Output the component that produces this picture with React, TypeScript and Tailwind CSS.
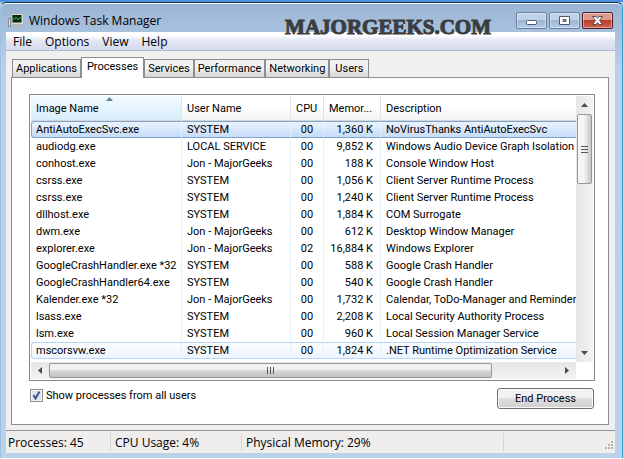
import type { ReactNode } from 'react';
import { useState } from 'react';
import clsx from 'clsx';

type Process = {
  name: string;
  user: string;
  cpu: string;
  memory: string;
  description: string;
};

const MENU = ['File', 'Options', 'View', 'Help'];
const TABS = ['Applications', 'Processes', 'Services', 'Performance', 'Networking', 'Users'];

const PROCESSES: Process[] = [
  { name: 'AntiAutoExecSvc.exe', user: 'SYSTEM', cpu: '00', memory: '1,360 K', description: 'NoVirusThanks AntiAutoExecSvc' },
  { name: 'audiodg.exe', user: 'LOCAL SERVICE', cpu: '00', memory: '9,852 K', description: 'Windows Audio Device Graph Isolation' },
  { name: 'conhost.exe', user: 'Jon - MajorGeeks', cpu: '00', memory: '188 K', description: 'Console Window Host' },
  { name: 'csrss.exe', user: 'SYSTEM', cpu: '00', memory: '1,056 K', description: 'Client Server Runtime Process' },
  { name: 'csrss.exe', user: 'SYSTEM', cpu: '00', memory: '1,240 K', description: 'Client Server Runtime Process' },
  { name: 'dllhost.exe', user: 'SYSTEM', cpu: '00', memory: '1,884 K', description: 'COM Surrogate' },
  { name: 'dwm.exe', user: 'Jon - MajorGeeks', cpu: '00', memory: '612 K', description: 'Desktop Window Manager' },
  { name: 'explorer.exe', user: 'Jon - MajorGeeks', cpu: '02', memory: '16,884 K', description: 'Windows Explorer' },
  { name: 'GoogleCrashHandler.exe *32', user: 'SYSTEM', cpu: '00', memory: '588 K', description: 'Google Crash Handler' },
  { name: 'GoogleCrashHandler64.exe', user: 'SYSTEM', cpu: '00', memory: '540 K', description: 'Google Crash Handler' },
  { name: 'Kalender.exe *32', user: 'Jon - MajorGeeks', cpu: '00', memory: '1,732 K', description: 'Calendar, ToDo-Manager and Reminder' },
  { name: 'lsass.exe', user: 'SYSTEM', cpu: '00', memory: '2,208 K', description: 'Local Security Authority Process' },
  { name: 'lsm.exe', user: 'SYSTEM', cpu: '00', memory: '960 K', description: 'Local Session Manager Service' },
  { name: 'mscorsvw.exe', user: 'SYSTEM', cpu: '00', memory: '1,824 K', description: '.NET Runtime Optimization Service' },
];

const SELECTED = 0;
const HOVERED = 13;

export default function App() {
  return (
    <div className="flex min-h-screen flex-col border-t-2 border-b border-t-[#4a90dc] border-b-white bg-[#a9cbe9] font-['Open_Sans','Noto_Sans',sans-serif] text-black">
      <div className="flex flex-1 flex-col rounded-t-md border-x border-t border-[#16324f] border-l-[#9dbfe0] border-r-[#2f9fd0] bg-linear-to-b from-[#9ab5d4] via-[#bad1ea] via-15% to-[#bbd2eb] pr-[7px] pb-[5px] pl-[5px] shadow-[inset_0_1px_0_#f4faff]">
        <TitleBar />
        <main className="flex flex-1 flex-col bg-[#f0f0f0]">
          <MenuBar />
          <div className="flex flex-1 flex-col pt-[6px] pr-[6px] pb-[5px] pl-[5px]">
            <Tabs />
            <Panel />
          </div>
          <StatusBar />
        </main>
      </div>
    </div>
  );
}

function TitleBar() {
  return (
    <header className="relative flex h-[29px] items-center gap-[5px] pt-[6px] pl-[2px]">
      <MonitorIcon />
      <h1 className="text-[12px] leading-4">Windows Task Manager</h1>
      <span className="absolute top-[12px] right-[124px] z-10 font-['Liberation_Serif',serif] text-[21px] leading-[24px] font-bold text-[#3a3d40] [-webkit-text-stroke:1px_#3a3d40]">
        MAJORGEEKS.COM
      </span>
      <div className="ml-auto flex gap-[2px] pr-[2px]">
        <CaptionButton label="Minimize">
          <rect x="10.5" y="8.5" width="10" height="4" rx="1" fill="#fff" stroke="#4d5a6b" />
        </CaptionButton>
        <CaptionButton label="Maximize">
          <path d="M10.5 4.500h10v8h-10z M14 7.500v2h3v-2z" fill="#fff" stroke="#4d5a6b" fillRule="evenodd" />
        </CaptionButton>
        <CaptionButton label="Close" danger>
          <path
            d="M10.500 4.500h3.500l1.500 1.800 1.500-1.800h3.500l-3 4 3 4h-3.500l-1.500-1.800-1.500 1.800h-3.500l3-4z"
            fill="#fff"
            stroke="#5b4a55"
          />
        </CaptionButton>
      </div>
    </header>
  );
}

function MonitorIcon() {
  return (
    <svg width="16" height="16" viewBox="0 0 16 16" aria-hidden>
      <rect x="0.500" y="5.500" width="2" height="8" fill="#e2e4e2" stroke="#8b9390" />
      <rect x="3.500" y="0.500" width="12" height="11" rx="1" fill="#d9ddd8" stroke="#9aa19c" strokeWidth="0.500" />
      <rect x="4.500" y="2" width="9" height="7.500" fill="#08240f" />
      <path d="M5 6h2l1-2 2 3 1-2h2.500" fill="none" stroke="#35b34a" />
      <path d="M8 11.500h4v1.500h2v2H6V13h2z" fill="#b4bab5" />
    </svg>
  );
}

function CaptionButton({ label, danger = false, children }: { label: string; danger?: boolean; children: ReactNode }) {
  return (
    <button
      type="button"
      aria-label={label}
      className={clsx(
        'h-[17px] w-[31px] rounded-[2px] border shadow-[inset_0_0_0_1px_rgba(255,255,255,0.4)]',
        danger
          ? 'border-[#4e1d2a] bg-linear-to-b from-[#dd9b8f] from-45% via-[#bd3a29] via-50% to-[#cf6651]'
          : 'border-[#687f9d] bg-linear-to-b from-[#bfd2e8] from-45% via-[#9db6d2] via-50% to-[#b3cce6]',
      )}
    >
      <svg width="31" height="17" viewBox="0 0 31 17" className="-m-px max-w-none" aria-hidden>
        {children}
      </svg>
    </button>
  );
}

function MenuBar() {
  return (
    <nav className="flex h-[19px] items-center border-b border-[#b4bac9] bg-linear-to-b from-white from-20% via-[#e4e8f4] via-45% to-[#d5daed] pt-[2px] pl-[7px] text-[12px] leading-4">
      {MENU.map((item) => (
        <button key={item} type="button" className="mr-[13px]">
          {item}
        </button>
      ))}
    </nav>
  );
}

function Tabs() {
  const [active, setActive] = useState('Processes');
  return (
    <div role="tablist" className="flex items-end pl-px font-['Roboto',sans-serif] text-[11px] leading-[14px]">
      {TABS.map((tab) => (
        <button
          key={tab}
          type="button"
          role="tab"
          aria-selected={tab === active}
          onClick={() => setActive(tab)}
          className={clsx(
            'min-w-[40px] border border-b-0 border-[#8b8d93]',
            tab === active
              ? 'z-10 -mb-px h-[21px] bg-white px-[5px] pb-[2px]'
              : 'h-[18px] bg-linear-to-b from-[#f2f2f2] from-45% to-[#d6d6d6] px-[3px]',
          )}
        >
          {tab}
        </button>
      ))}
    </div>
  );
}

function Panel() {
  return (
    <section className="flex flex-1 flex-col border border-[#8b8d93] bg-white pt-4 pr-[13px] pb-[15px] pl-[17px] font-['Roboto',sans-serif] text-[11px] leading-[15px]">
      <div className="flex flex-1 flex-col border border-[#828790] p-px">
        <div className="flex flex-1">
          <div className="min-w-0 flex-1 overflow-hidden">
            <ProcessTable />
          </div>
          <VerticalScrollbar />
        </div>
        <HorizontalScrollbar />
      </div>
      <div className="flex items-start justify-between px-px pt-[7px]">
        <label className="flex items-center gap-[3px]">
          <span className="relative flex">
            <input
              type="checkbox"
              defaultChecked
              className="peer size-[13px] appearance-none border border-[#8e8f8f] bg-[#dfe4ec] shadow-[inset_0_0_0_1px_#f6f6f6]"
            />
            <svg
              width="13"
              height="13"
              viewBox="0 0 13 13"
              className="pointer-events-none absolute inset-0 hidden peer-checked:block"
              aria-hidden
            >
              <path d="M3.500 6l2 3.500 4-7" fill="none" stroke="#42568f" strokeWidth="2" />
            </svg>
          </span>
          Show processes from all users
        </label>
        <button
          type="button"
          className="h-[21px] w-[97px] rounded-[3px] border border-[#707070] bg-linear-to-b from-[#f2f2f2] from-45% via-[#dedede] via-50% to-[#cfcfcf] shadow-[inset_0_0_0_1px_#fafafa]"
        >
          End Process
        </button>
      </div>
    </section>
  );
}

function ProcessTable() {
  return (
    <table className="w-full table-fixed border-separate border-spacing-0 text-left whitespace-nowrap">
      <colgroup>
        <col className="w-[151px]" />
        <col className="w-[109px]" />
        <col className="w-[33px]" />
        <col className="w-[57px]" />
        <col />
      </colgroup>
      <thead>
        <tr className="h-[25px]">
          <HeaderCell className="relative border-r-[#96d9f9] bg-linear-to-b from-[#f2fbff] to-[#d8effb]">
            Image Name
            <svg width="7" height="4" viewBox="0 0 7 4" className="absolute top-px left-1/2" aria-hidden>
              <path d="M0 4l3.500-4L7 4z" fill="#5b8096" />
            </svg>
          </HeaderCell>
          <HeaderCell>User Name</HeaderCell>
          <HeaderCell>CPU</HeaderCell>
          <HeaderCell>Memor...</HeaderCell>
          <HeaderCell className="border-r-0">Description</HeaderCell>
        </tr>
      </thead>
      <tbody>
        {PROCESSES.map((process, i) => (
          <ProcessRow key={i} process={process} state={i === SELECTED ? 'selected' : i === HOVERED ? 'hovered' : 'plain'} />
        ))}
      </tbody>
    </table>
  );
}

function HeaderCell({ className, children }: { className?: string; children: ReactNode }) {
  return (
    <th
      className={clsx(
        'border-r border-b border-r-[#e2e4e8] border-b-[#d5d5d5] px-[5px] pt-px font-normal',
        className ?? '',
        !className?.includes('bg-') && 'bg-linear-to-b from-white from-45% to-[#f3f4f5]',
      )}
    >
      {children}
    </th>
  );
}

function ProcessRow({ process, state }: { process: Process; state: 'plain' | 'selected' | 'hovered' }) {
  const cell = clsx(
    'overflow-hidden border-y border-r border-r-[#e3f0fb] py-0 pl-[5px] last:border-r-0 first:rounded-l-[3px]',
    state === 'plain' && 'border-y-transparent',
    state === 'selected' && 'border-y-[#7da2ce] bg-linear-to-b from-[#eaf3fe] to-[#c5dcf8] first:border-l first:border-l-[#7da2ce] first:pl-[4px]',
    state === 'hovered' && 'border-y-[#b8d6fb] bg-linear-to-b from-[#fbfdff] to-[#edf5fe] first:border-l first:border-l-[#b8d6fb] first:pl-[4px]',
  );
  return (
    <tr className="h-[17px]">
      <td className={cell}>{process.name}</td>
      <td className={cell}>{process.user}</td>
      <td className={clsx(cell, 'pr-[5px] text-center')}>{process.cpu}</td>
      <td className={clsx(cell, 'pr-[7px] text-right')}>{process.memory}</td>
      <td className={cell}>{process.description}</td>
    </tr>
  );
}

function VerticalScrollbar() {
  return (
    <div className="flex w-[17px] flex-col bg-linear-to-r from-[#e6e6e6] to-[#f3f3f3]">
      <button type="button" aria-label="Scroll up" className="flex h-[18px] items-center justify-center">
        <svg width="7" height="4" viewBox="0 0 7 4" aria-hidden>
          <path d="M0 4l3.500-4L7 4z" fill="#4a4a4a" />
        </svg>
      </button>
      <div className="flex flex-1 flex-col">
        <div className="mx-px flex h-[70px] flex-col items-center justify-center gap-[2px] rounded-[2px] border border-[#979797] bg-linear-to-r from-[#f5f5f5] from-45% to-[#c6c6c8]">
          <span className="h-px w-[7px] bg-[#555]" />
          <span className="h-px w-[7px] bg-[#555]" />
          <span className="h-px w-[7px] bg-[#555]" />
        </div>
      </div>
      <button type="button" aria-label="Scroll down" className="flex h-[18px] items-center justify-center">
        <svg width="7" height="4" viewBox="0 0 7 4" aria-hidden>
          <path d="M0 0h7L3.500 4z" fill="#4a4a4a" />
        </svg>
      </button>
    </div>
  );
}

function HorizontalScrollbar() {
  return (
    <div className="mr-[17px] flex h-[17px] bg-linear-to-b from-[#e6e6e6] to-[#f3f3f3]">
      <button type="button" aria-label="Scroll left" className="flex w-[18px] items-center justify-center">
        <svg width="4" height="7" viewBox="0 0 4 7" aria-hidden>
          <path d="M4 0v7L0 3.500z" fill="#4a4a4a" />
        </svg>
      </button>
      <div className="flex flex-1 py-px">
        <div className="flex w-[87%] items-center justify-center gap-[2px] rounded-[2px] border border-[#979797] bg-linear-to-b from-[#f0f0f0] from-45% via-[#d8d8d8] via-50% to-[#c2c2c4]">
          <span className="h-[7px] w-px bg-[#555]" />
          <span className="h-[7px] w-px bg-[#555]" />
          <span className="h-[7px] w-px bg-[#555]" />
        </div>
      </div>
      <button type="button" aria-label="Scroll right" className="flex w-[18px] items-center justify-center">
        <svg width="4" height="7" viewBox="0 0 4 7" aria-hidden>
          <path d="M0 0l4 3.500L0 7z" fill="#4a4a4a" />
        </svg>
      </button>
    </div>
  );
}

function StatusBar() {
  return (
    <footer className="flex h-[23px] border-t border-[#8f9196] bg-[#f0eded] py-[2px] text-[12px] leading-[20px]">
      <span className="w-[105px] border-r border-[#d5d5d5] pl-[2px]">Processes: 45</span>
      <span className="w-[131px] border-r border-[#d5d5d5] pl-[4px]">CPU Usage: 4%</span>
      <span className="flex-1 border-r border-[#d5d5d5] pl-[4px]">Physical Memory: 29%</span>
      <span className="flex w-[111px] items-end justify-end p-px">
        <svg width="9" height="9" viewBox="0 0 9 9" fill="#b5b3b3" aria-hidden>
          <path d="M6 0h2v2H6zM3 3h2v2H3zM6 3h2v2H6zM0 6h2v2H0zM3 6h2v2H3zM6 6h2v2H6z" />
        </svg>
      </span>
    </footer>
  );
}
